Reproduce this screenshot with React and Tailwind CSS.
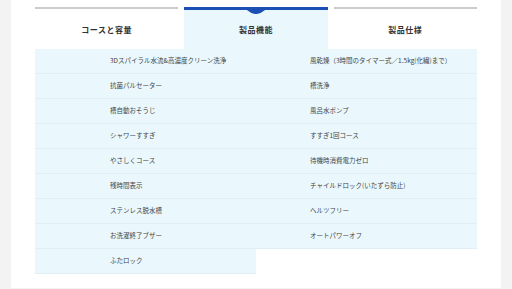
const left = [
  '3Dスパイラル水流&高濃度クリーン洗浄',
  '抗菌パルセーター',
  '槽自動おそうじ',
  'シャワーすすぎ',
  'やさしくコース',
  '残時間表示',
  'ステンレス脱水槽',
  'お洗濯終了ブザー',
  'ふたロック',
];

const right = [
  '風乾燥（3時間のタイマー式／1.5kg(化繊)まで）',
  '槽洗浄',
  '風呂水ポンプ',
  'すすぎ1回コース',
  '待機時消費電力ゼロ',
  'チャイルドロック(いたずら防止)',
  'ヘルツフリー',
  'オートパワーオフ',
];

const tabs = ['コースと容量', '製品機能', '製品仕様'];

export default function App() {
  const rows = left.map((l, i) => [l, right[i]]);

  return (
    <div
      className="w-[512px] h-[289px] overflow-hidden bg-[#f3f3f3] pl-[11px] pr-[11px]"
      style={{ fontFamily: '"Noto Sans CJK JP", "Noto Sans", sans-serif' }}
    >
      <div className="bg-white h-[288px] px-[24px] pt-[7px]">
        <div className="flex gap-[6px] h-[42px]">
          {tabs.map((t, i) => {
            const active = i === 1;
            return (
              <div key={t} className={`relative flex-1 flex items-center justify-center ${active ? 'bg-[#eaf8fd]' : 'bg-white'}`}>
                <div className={`absolute left-0 right-0 top-0 ${active ? 'h-[3px] bg-[#1b4fb4]' : 'h-[2px] bg-[#cccccc]'}`} />
                {active && (
                  <svg className="absolute top-[2px] left-1/2 -translate-x-1/2" width="26" height="6" viewBox="0 0 26 6">
                    <path d="M0 0 C5 0 7 5 13 5 C19 5 21 0 26 0 Z" fill="#1b4fb4" />
                  </svg>
                )}
                <span className="text-[8px] font-bold text-[#333] tracking-[0.5px] pt-[4px]">{t}</span>
              </div>
            );
          })}
        </div>
        <div className="grid grid-cols-2">
          {rows.map(([l, r], i) => (
            <div key={i} className="contents">
              <div className="h-[25px] bg-[#eaf8fd] border-b border-[#e0eff3] flex items-center pl-[75px] text-[6.5px] text-[#444]">
                {l}
              </div>
              {r ? (
                <div className="h-[25px] bg-[#eaf8fd] border-b border-[#e0eff3] flex items-center pl-[54px] text-[6.5px] text-[#444]">
                  {r}
                </div>
              ) : (
                <div className="h-[25px] bg-white" />
              )}
            </div>
          ))}
        </div>
      </div>
    </div>
  );
}
